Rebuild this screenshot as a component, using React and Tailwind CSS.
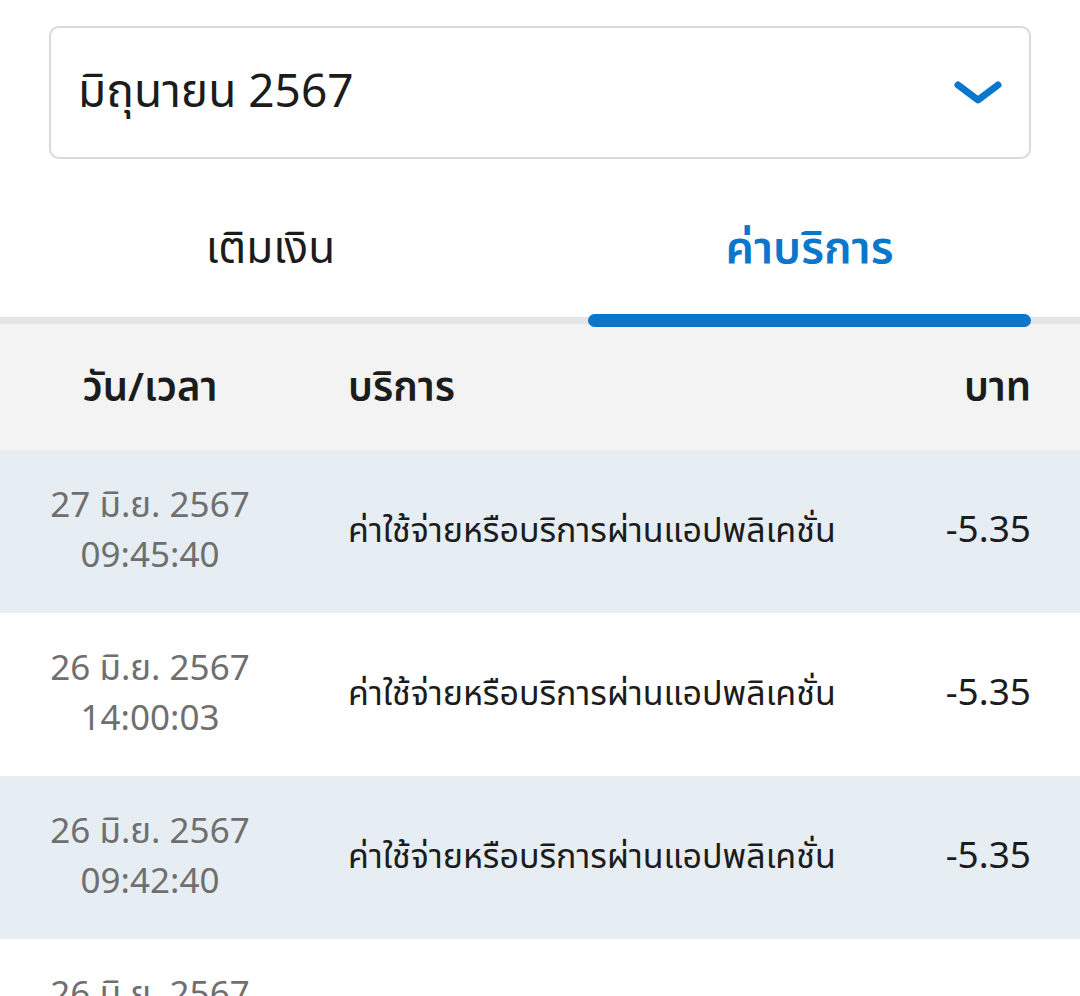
const rows = [
  { date: "27 มิ.ย. 2567", time: "09:45:40", amount: "-5.35", shade: true },
  { date: "26 มิ.ย. 2567", time: "14:00:03", amount: "-5.35", shade: false },
  { date: "26 มิ.ย. 2567", time: "09:42:40", amount: "-5.35", shade: true },
  { date: "26 มิ.ย. 2567", time: "08:15:12", amount: "-5.35", shade: false },
];

const font = { fontFamily: "'Noto Sans Thai', 'Noto Sans', sans-serif" };

export default function App() {
  return (
    <div className="w-[1080px] h-[996px] overflow-hidden bg-white" style={font}>
      <div className="pt-[26px] px-[49px]">
        <div className="h-[133px] border-2 border-[#d9d9d9] rounded-[10px] flex items-center justify-between pl-[27px] pr-[28px]">
          <span className="text-[46px] text-[#1c1c1c] leading-none">มิถุนายน 2567</span>
          <svg width="50" height="26" viewBox="0 0 50 26" className="mr-[-2px]">
            <polyline points="5,5 25,20 45,5" fill="none" stroke="#0a77cc" strokeWidth="7" strokeLinecap="round" strokeLinejoin="round" />
          </svg>
        </div>
      </div>

      <div className="relative h-[165px] border-b-[7px] border-[#e4e4e4]">
        <div className="h-full px-[49px] flex justify-between">
          <div className="w-[443px] flex items-center justify-center pt-[24px] text-[44px] text-[#1c1c1c]">เติมเงิน</div>
          <div className="relative w-[443px] flex items-center justify-center pt-[24px] text-[45px] font-semibold text-[#0a77cc]">
            ค่าบริการ
            <div className="absolute left-0 right-0 bottom-[-10px] h-[13px] rounded-full bg-[#0a77cc]" />
          </div>
        </div>
      </div>

      <div className="h-[126px] bg-[#f3f3f3] flex items-center px-[49px] pt-[4px] text-[40px] font-semibold text-[#1c1c1c]">
        <div className="w-[202px] text-center">วัน/เวลา</div>
        <div className="flex-1 pl-[97px]">บริการ</div>
        <div>บาท</div>
      </div>

      {rows.map((r, i) => (
        <div key={i} className={`h-[163px] flex items-center px-[49px] ${r.shade ? "bg-[#e6edf3]" : "bg-white"}`}>
          <div className="w-[202px] text-center text-[35px] leading-[50px] text-[#6f6f6f]">
            <div className="whitespace-nowrap">{r.date}</div>
            <div>{r.time}</div>
          </div>
          <div className="flex-1 pl-[97px] text-[34px] text-[#1c1c1c]">ค่าใช้จ่ายหรือบริการผ่านแอปพลิเคชั่น</div>
          <div className="text-[37px] text-[#1c1c1c]">{r.amount}</div>
        </div>
      ))}
    </div>
  );
}
